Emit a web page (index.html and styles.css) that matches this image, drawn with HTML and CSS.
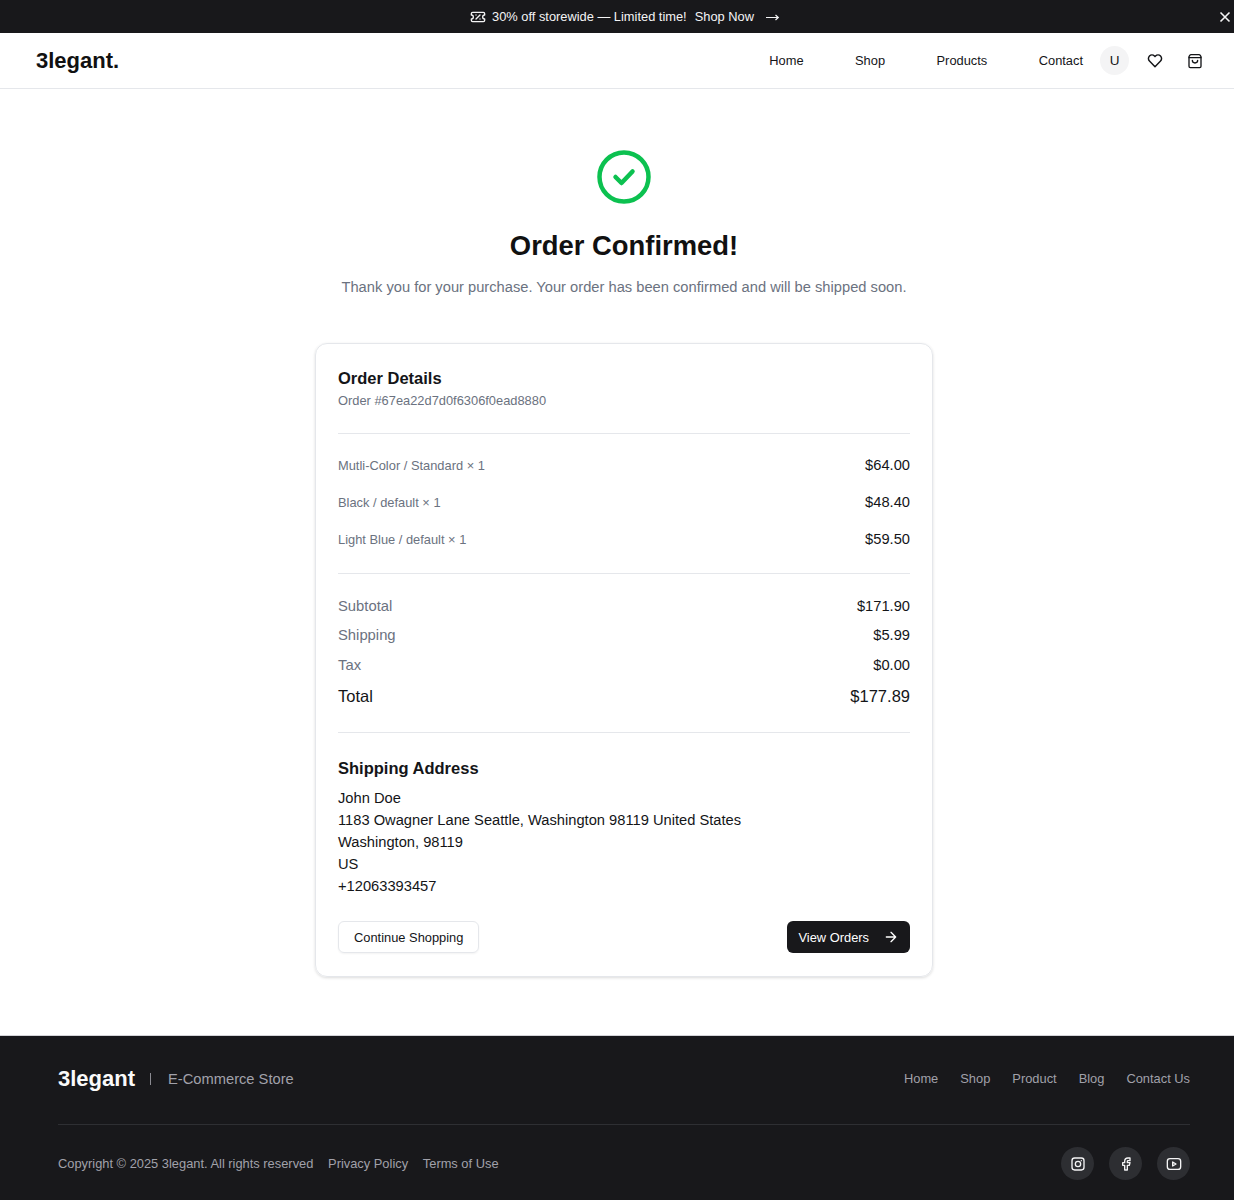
FILE: index.html
```html
<!DOCTYPE html>
<html lang="en">
<head>
<meta charset="utf-8">
<title>Order Confirmed</title>
<link rel="stylesheet" href="styles.css">
</head>
<body>
<div class="promo">
  <div class="promo-msg">
    <svg class="promo-ticket" width="16" height="16" viewBox="0 0 24 24" fill="none" stroke="currentColor" stroke-width="2" stroke-linecap="round" stroke-linejoin="round"><path d="M2 9V7a2 2 0 0 1 2-2h16a2 2 0 0 1 2 2v2a3 3 0 0 0 0 6v2a2 2 0 0 1-2 2H4a2 2 0 0 1-2-2v-2a3 3 0 0 0 0-6Z"/><path d="M9 9h.01M15 9l-6 6M15 15h.01"/></svg>
    <span>30% off storewide — Limited time!</span>
    <a class="promo-link">Shop Now</a>
    <svg class="promo-arrow" width="15" height="10" viewBox="0 0 15 10" fill="none" stroke="currentColor" stroke-width="1.2"><path d="M1 5.500h12M10.500 3l2.800 2.500-2.800 2.500"/></svg>
  </div>
  <svg class="promo-close" width="16" height="16" viewBox="0 0 16 16" fill="none" stroke="currentColor" stroke-width="1.6"><path d="M3.500 3.500l9 9M12.500 3.500l-9 9"/></svg>
</div>
<header class="nav">
  <div class="logo">3legant.</div>
  <nav class="nav-right">
    <ul class="nav-links">
      <li>Home</li><li>Shop</li><li>Products</li><li>Contact</li>
    </ul>
    <div class="avatar">U</div>
    <svg class="nav-heart" width="16" height="16" viewBox="0 0 24 24" fill="none" stroke="currentColor" stroke-width="2.200" stroke-linejoin="round"><path d="M12 20.500l-8.300-8.400a5.300 5.300 0 0 1 7.500-7.500l.8.800.8-.8a5.300 5.300 0 0 1 7.500 7.500z"/></svg>
    <svg class="nav-bag" width="16" height="16" viewBox="0 0 24 24" fill="none" stroke="currentColor" stroke-width="2" stroke-linecap="round" stroke-linejoin="round"><path d="M6 2.500h12a2 2 0 0 1 1.600.8L21 5.500V20a2 2 0 0 1-2 2H5a2 2 0 0 1-2-2V5.500l1.400-2.200A2 2 0 0 1 6 2.500Z"/><path d="M3 7h18M16 11a4 4 0 0 1-8 0"/></svg>
  </nav>
</header>
<main class="main">
  <svg class="check" width="54" height="54" viewBox="0 0 54 54" fill="none" stroke="#0cc150" stroke-width="4.500" stroke-linecap="round" stroke-linejoin="round"><circle cx="27" cy="27" r="24.500"/><path d="M18.500 27l6 6 11-11.500"/></svg>
  <h1 class="title">Order Confirmed!</h1>
  <p class="lead">Thank you for your purchase. Your order has been confirmed and will be shipped soon.</p>
  <section class="card">
    <h2 class="card-h">Order Details</h2>
    <p class="order-id">Order #67ea22d7d0f6306f0ead8880</p>
    <div class="items">
      <div class="row"><span class="item-name">Mutli-Color / Standard × 1</span><span class="item-price">$64.00</span></div>
      <div class="row"><span class="item-name">Black / default × 1</span><span class="item-price">$48.40</span></div>
      <div class="row"><span class="item-name">Light Blue / default × 1</span><span class="item-price">$59.50</span></div>
    </div>
    <div class="totals">
      <div class="row tot"><span class="tot-label">Subtotal</span><span>$171.90</span></div>
      <div class="row tot"><span class="tot-label">Shipping</span><span>$5.99</span></div>
      <div class="row tot"><span class="tot-label">Tax</span><span>$0.00</span></div>
      <div class="row grand"><span>Total</span><span class="grand-val">$177.89</span></div>
    </div>
    <div class="ship">
      <h2 class="card-h">Shipping Address</h2>
      <address class="addr">
        <div>John Doe</div>
        <div>1183 Owagner Lane Seattle, Washington 98119 United States</div>
        <div>Washington, 98119</div>
        <div>US</div>
        <div>+12063393457</div>
      </address>
    </div>
    <div class="actions">
      <a class="btn btn-light">Continue Shopping</a>
      <a class="btn btn-dark">View Orders
        <svg width="16" height="16" viewBox="0 0 24 24" fill="none" stroke="currentColor" stroke-width="2" stroke-linecap="round" stroke-linejoin="round"><path d="M5 12h14M12 5l7 7-7 7"/></svg>
      </a>
    </div>
  </section>
</main>
<footer class="footer">
  <div class="foot-top">
    <div class="foot-brand">
      <span class="foot-logo">3legant</span>
      <span class="foot-sep"></span>
      <span class="foot-tag">E-Commerce Store</span>
    </div>
    <ul class="foot-links">
      <li>Home</li><li>Shop</li><li>Product</li><li>Blog</li><li>Contact Us</li>
    </ul>
  </div>
  <div class="foot-bottom">
    <div class="foot-legal">
      <span>Copyright © 2025 3legant. All rights reserved</span>
      <span>Privacy Policy</span>
      <span>Terms of Use</span>
    </div>
    <div class="socials">
      <div class="social"><svg width="16" height="16" viewBox="0 0 24 24" fill="none" stroke="currentColor" stroke-width="2" stroke-linecap="round" stroke-linejoin="round"><rect x="3" y="3" width="18" height="18" rx="4"/><circle cx="12" cy="12" r="4"/><path d="M17 7h.01"/></svg></div>
      <div class="social"><svg width="16" height="16" viewBox="0 0 24 24" fill="none" stroke="currentColor" stroke-width="2" stroke-linecap="round" stroke-linejoin="round"><path d="M7 10v4h3v7h4v-7h3l1-4h-4V8a1 1 0 0 1 1-1h3V3h-3a5 5 0 0 0-5 5v2H7"/></svg></div>
      <div class="social"><svg width="16" height="16" viewBox="0 0 24 24" fill="none" stroke="currentColor" stroke-width="2" stroke-linecap="round" stroke-linejoin="round"><path d="M2 8a4 4 0 0 1 4-4h12a4 4 0 0 1 4 4v8a4 4 0 0 1-4 4H6a4 4 0 0 1-4-4V8z"/><path d="M10 9l5 3-5 3z"/></svg></div>
    </div>
  </div>
</footer>
</body>
</html>
```
FILE: styles.css
```css
* { box-sizing: border-box; }
html, body { margin: 0; padding: 0; }
body { font-family: "Liberation Sans", Arial, sans-serif; color: #141518; background: #fff; overflow-x: hidden; }
ul { list-style: none; margin: 0; padding: 0; }
h1, h2, p { margin: 0; }
address { font-style: normal; }

.promo { height: 33px; background: #18181b; color: #f4f4f5; display: flex; align-items: center; justify-content: center; position: relative; font-size: 12.850px; padding-left: 16px; }
.promo-msg { display: flex; align-items: center; }
.promo-ticket { margin-right: 6px; }
.promo-link { margin-left: 8px; }
.promo-arrow { margin-left: 11px; }
.promo-close { position: absolute; right: 1px; top: 9px; }

.nav { height: 56px; border-bottom: 1px solid #e5e7eb; display: flex; align-items: center; justify-content: space-between; padding: 0 31px 0 36px; }
.logo { font-size: 22px; font-weight: 700; color: #111; }
.nav-right { display: flex; align-items: center; }
.nav-links { display: flex; gap: 51.500px; font-size: 12.850px; margin-right: 17px; }
.avatar { width: 29px; height: 29px; border-radius: 50%; background: #f4f4f5; display: flex; align-items: center; justify-content: center; font-size: 13.500px; }
.nav-heart { margin-left: 18px; }
.nav-bag { margin-left: 24px; }

.main { display: flex; flex-direction: column; align-items: center; padding: 61px 0 58px 14px; }
.check { display: block; }
.title { font-size: 27.400px; line-height: 36px; font-weight: 700; margin-top: 24px; color: #111; }
.lead { font-size: 14.700px; line-height: 24px; color: #6b7280; margin-top: 11px; }
.card { width: 618px; margin-top: 44px; padding: 23px 22px 23px; border: 1px solid #e5e7eb; border-radius: 12px; box-shadow: 0 1px 3px rgba(0,0,0,.14); }
.card-h { font-size: 16.500px; line-height: 22px; font-weight: 700; }
.order-id { font-size: 12.870px; line-height: 16px; color: #6b7280; margin-top: 4px; }
.items { margin-top: 24px; border-top: 1px solid #e5e7eb; border-bottom: 1px solid #e5e7eb; padding: 21px 0 23px; display: flex; flex-direction: column; gap: 16px; }
.row { display: flex; justify-content: space-between; align-items: center; }
.items .row { height: 21px; }
.item-name { font-size: 12.870px; color: #6b7280; }
.item-price { font-size: 14.700px; position: relative; top: -1px; }
.totals { padding: 17px 0 20.500px; border-bottom: 1px solid #e5e7eb; }
.tot { height: 29.500px; font-size: 14.700px; }
.tot-label { color: #6b7280; font-size: 14.800px; }
.grand { height: 32px; font-size: 16.500px; padding-top: 2px; }
.ship { padding-top: 24px; }
.addr { margin-top: 8px; font-size: 14.700px; line-height: 22px; }
.actions { display: flex; justify-content: space-between; margin-top: 24px; }
.btn { height: 32px; border-radius: 6px; font-size: 12.870px; display: flex; align-items: center; }
.btn-light { padding: 0 15px; border: 1px solid #e5e7eb; box-shadow: 0 1px 2px rgba(0,0,0,.05); }
.btn-dark { padding: 0 11px; gap: 14px; background: #18181b; color: #fff; }

.footer { background: #18181b; height: 165px; padding: 0 44px 0 58px; border-top: 1px solid #d4d4d8; color: #a1a1aa; }
.foot-top { height: 89px; border-bottom: 1px solid #2e2f33; display: flex; align-items: center; justify-content: space-between; padding-bottom: 3px; }
.foot-brand { display: flex; align-items: center; }
.foot-logo { font-size: 22px; font-weight: 700; color: #fafafa; }
.foot-sep { width: 1px; height: 12px; background: #8b8b92; margin: 0 17px 0 15px; }
.foot-tag { font-size: 14.700px; }
.foot-links { display: flex; gap: 22px; font-size: 12.870px; }
.foot-bottom { display: flex; align-items: center; justify-content: space-between; height: 76px; padding-top: 1px; }
.foot-legal { display: flex; gap: 14.700px; font-size: 12.870px; }
.socials { display: flex; gap: 15px; }
.social { width: 33px; height: 33px; border-radius: 50%; background: #2d2e32; color: #f4f4f5; display: flex; align-items: center; justify-content: center; }
```
